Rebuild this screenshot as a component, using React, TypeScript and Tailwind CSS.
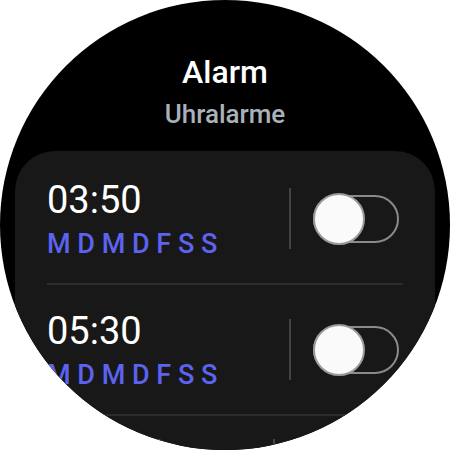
import React from 'react';

interface Alarm {
  time: string;
  days: string;
  on: boolean;
}

const alarms: Alarm[] = [
  { time: '03:50', days: 'M D M D F S S', on: false },
  { time: '05:30', days: 'M D M D F S S', on: false },
];

function Toggle({ on }: { on: boolean }) {
  return (
    <div className="relative w-[86px] h-[48px] rounded-full border-2 border-[#8a8a8a]">
      <div
        className={
          on
            ? 'absolute right-[-2px] top-1/2 -translate-y-1/2 w-[52px] h-[52px] rounded-full bg-[#fafafa] border-2 border-[#9a9a9a]'
            : 'absolute left-[-2px] top-1/2 -translate-y-1/2 w-[52px] h-[52px] rounded-full bg-[#fafafa] border-2 border-[#9a9a9a]'
        }
      />
    </div>
  );
}

export default function App() {
  return (
    <div className="w-[450px] h-[450px] bg-white" style={{ fontFamily: 'Roboto, "Noto Sans", sans-serif' }}>
      <div className="w-[450px] h-[450px] rounded-full bg-black overflow-hidden flex flex-col items-center">
        {/* Header */}
        <div className="pt-[54px] flex flex-col items-center">
          <h1 className="text-[32px] leading-[36px] font-medium text-white">Alarm</h1>
          <p className="mt-[9px] text-[26px] leading-[30px] font-medium text-[#a9b1bb]">Uhralarme</p>
        </div>

        {/* List */}
        <div className="mt-[22px] w-[420px] flex-1 bg-[#181818] rounded-t-[40px] pt-[3px]">
          {alarms.map((a, i) => (
            <div key={i}>
              <div className="flex items-center pl-[32px] pr-[36px] pt-[24px] pb-[24px]">
                <div className="flex-1">
                  <div className="text-[38px] leading-[44px] text-white">{a.time}</div>
                  <div className="mt-[7px] text-[27px] leading-[30px] font-medium text-[#5c63ee]">{a.days}</div>
                </div>
                <div className="w-[2px] h-[61px] bg-[#444444] mr-[22px]" />
                <Toggle on={a.on} />
              </div>
              <div className="mx-[32px] h-[2px] bg-[#2c2c2c]" />
            </div>
          ))}

          {/* Bottom actions (cut off) */}
          <div className="flex items-start pt-[23px] pl-[138px]">
            <div className="w-[10px] h-[10px] rounded-full bg-[#5a5a5a]" />
            <div className="ml-[110px] w-[2px] h-[40px] bg-[#444444]" />
          </div>
        </div>
      </div>
    </div>
  );
}
